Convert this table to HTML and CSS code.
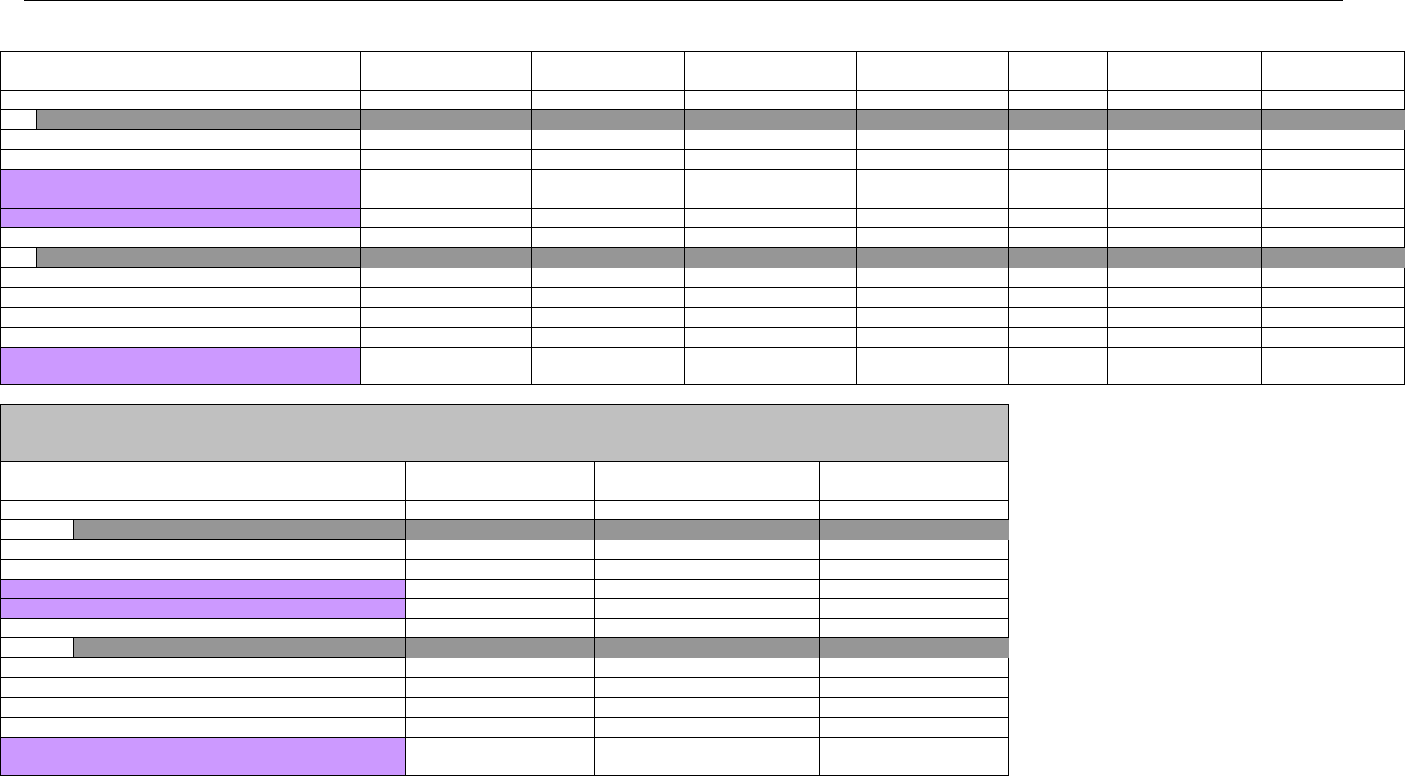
FILE: index.html
```html
<!DOCTYPE html>
<html>
<head>
<meta charset="utf-8">
<title>Sheet</title>
<link rel="stylesheet" href="styles.css">
</head>
<body>
<div class="rule"></div>

<div class="sheet sheet-wide">
  <div class="c lead"></div><div class="c"></div><div class="c"></div><div class="c"></div><div class="c"></div><div class="c"></div><div class="c"></div><div class="c"></div>
  <div class="c lead"></div><div class="c"></div><div class="c"></div><div class="c"></div><div class="c"></div><div class="c"></div><div class="c"></div><div class="c"></div>
  <div class="c"></div><div class="c g gl"></div><div class="c g"></div><div class="c g"></div><div class="c g"></div><div class="c g"></div><div class="c g"></div><div class="c g"></div><div class="c g last"></div>
  <div class="c lead"></div><div class="c"></div><div class="c"></div><div class="c"></div><div class="c"></div><div class="c"></div><div class="c"></div><div class="c"></div>
  <div class="c lead"></div><div class="c"></div><div class="c"></div><div class="c"></div><div class="c"></div><div class="c"></div><div class="c"></div><div class="c"></div>
  <div class="c lead p"></div><div class="c"></div><div class="c"></div><div class="c"></div><div class="c"></div><div class="c"></div><div class="c"></div><div class="c"></div>
  <div class="c lead p"></div><div class="c"></div><div class="c"></div><div class="c"></div><div class="c"></div><div class="c"></div><div class="c"></div><div class="c"></div>
  <div class="c lead"></div><div class="c"></div><div class="c"></div><div class="c"></div><div class="c"></div><div class="c"></div><div class="c"></div><div class="c"></div>
  <div class="c"></div><div class="c g gl"></div><div class="c g"></div><div class="c g"></div><div class="c g"></div><div class="c g"></div><div class="c g"></div><div class="c g"></div><div class="c g last"></div>
  <div class="c lead"></div><div class="c"></div><div class="c"></div><div class="c"></div><div class="c"></div><div class="c"></div><div class="c"></div><div class="c"></div>
  <div class="c lead"></div><div class="c"></div><div class="c"></div><div class="c"></div><div class="c"></div><div class="c"></div><div class="c"></div><div class="c"></div>
  <div class="c lead"></div><div class="c"></div><div class="c"></div><div class="c"></div><div class="c"></div><div class="c"></div><div class="c"></div><div class="c"></div>
  <div class="c lead"></div><div class="c"></div><div class="c"></div><div class="c"></div><div class="c"></div><div class="c"></div><div class="c"></div><div class="c"></div>
  <div class="c lead p"></div><div class="c"></div><div class="c"></div><div class="c"></div><div class="c"></div><div class="c"></div><div class="c"></div><div class="c"></div>
</div>

<div class="sheet sheet-narrow">
  <div class="c title"></div>
  <div class="c lead"></div><div class="c"></div><div class="c"></div><div class="c"></div>
  <div class="c lead"></div><div class="c"></div><div class="c"></div><div class="c"></div>
  <div class="c"></div><div class="c g gl"></div><div class="c g"></div><div class="c g"></div><div class="c g last"></div>
  <div class="c lead"></div><div class="c"></div><div class="c"></div><div class="c"></div>
  <div class="c lead"></div><div class="c"></div><div class="c"></div><div class="c"></div>
  <div class="c lead p"></div><div class="c"></div><div class="c"></div><div class="c"></div>
  <div class="c lead p"></div><div class="c"></div><div class="c"></div><div class="c"></div>
  <div class="c lead"></div><div class="c"></div><div class="c"></div><div class="c"></div>
  <div class="c"></div><div class="c g gl"></div><div class="c g"></div><div class="c g"></div><div class="c g last"></div>
  <div class="c lead"></div><div class="c"></div><div class="c"></div><div class="c"></div>
  <div class="c lead"></div><div class="c"></div><div class="c"></div><div class="c"></div>
  <div class="c lead"></div><div class="c"></div><div class="c"></div><div class="c"></div>
  <div class="c lead"></div><div class="c"></div><div class="c"></div><div class="c"></div>
  <div class="c lead p"></div><div class="c"></div><div class="c"></div><div class="c"></div>
</div>
</body>
</html>
```

FILE: styles.css
```css
html, body {
  margin: 0;
  padding: 0;
  background: #ffffff;
  font-family: "Liberation Sans", Arial, sans-serif;
}

.rule {
  height: 1px;
  width: 1319px;
  margin-left: 24px;
  background: #000000;
}

.sheet {
  display: grid;
  border-left: 1px solid #000000;
  border-top: 1px solid #000000;
  box-sizing: content-box;
}

.sheet-wide {
  margin-top: 50px;
  width: 1404px;
  grid-template-columns: 36px 324px 171px 153px 172px 152px 99px 154px 143px;
  grid-template-rows: 39px 19px 20px 20px 20px 39px 19px 20px 20px 20px 20px 20px 20px 37px;
}

.sheet-narrow {
  margin-top: 19px;
  width: 1008px;
  grid-template-columns: 73px 332px 189px 225px 189px;
  grid-template-rows: 57px 39px 19px 20px 20px 20px 19px 20px 19px 20px 20px 20px 20px 20px 38px;
}

.c {
  box-sizing: border-box;
  border-right: 1px solid #000000;
  border-bottom: 1px solid #000000;
  background: #ffffff;
}

.lead {
  grid-column: span 2;
}

.title {
  grid-column: 1 / -1;
  background: #c0c0c0;
}

.p {
  background: #cc99ff;
}

.g {
  background: #969696;
  border-bottom: none;
}

.g.gl {
  border-bottom: 1px solid #000000;
}

.g.last {
  border-right-color: #969696;
}
```
